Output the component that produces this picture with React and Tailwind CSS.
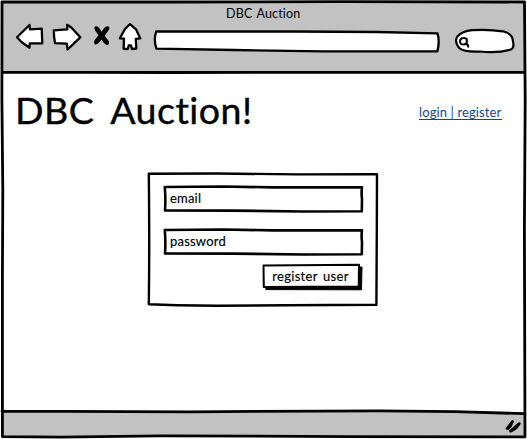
const strokeProps = { fill: 'none', stroke: '#000', strokeLinejoin: 'round', strokeLinecap: 'round' };

// Hand-drawn outline that sits behind the content of its box.
function Outline({ w, h, d, fill = 'none', stroke = 2.6 }) {
  return (
    <svg className="pointer-events-none absolute top-0 left-0 overflow-visible" width={w} height={h} viewBox={`0 0 ${w} ${h}`} aria-hidden="true">
      <path {...strokeProps} d={d} fill={fill} strokeWidth={stroke} />
    </svg>
  );
}

function NavIcons() {
  return (
    <svg className="block shrink-0" width="128" height="32" viewBox="15 21 128 32" aria-label="Navigation">
      <g {...strokeProps} strokeWidth="2.3">
        <path fill="#fff" d="M17 37.3 L29.5 25 L30 29.3 L41.7 28.6 L42.3 43.3 L29.8 43.3 L29.5 47.7 L21.5 42 Z" />
        <path fill="#fff" d="M53.8 30.3 L67.3 29.4 L67.2 24.8 L71.3 27.5 L80.3 37.3 L67.6 49.5 L66.8 43.6 L55 43.2 Q53.7 36 53.8 30.3 Z" />
        <path fill="#fff" d="M130 24.2 L125 29 L119.8 38.4 L124 38.7 L123.6 48.8 L127.8 49 L128.7 45.5 L130.9 45.3 L132 49 L136.3 48.5 L135.8 38.8 L140.2 38.3 L136 29.3 Z" />
      </g>
      <path d="M95 26.5 Q97.5 25.4 99.5 28.5 L101.6 31.8 L104 28.2 Q106.5 25.3 109.3 27 Q110.2 29 107.8 31.5 L104.7 35.8 L108.8 41.3 Q109.6 44.8 107 45 Q104.3 44.4 101.4 39.5 Q98 44.8 95 44.6 Q93 42.5 95 39.5 L98.5 35.2 L95.6 31.2 Q93.6 28 95 26.5 Z" />
    </svg>
  );
}

function Field({ label }) {
  return (
    <div className="relative flex h-[28px] w-[201px] items-center pl-[7px]">
      <Outline w={201} h={28} fill="#fff" d="M1.8 2 L60 1.5 L110 2.4 L199 2.3 Q198.2 8 199 14 L198.8 26.3 L140 26.5 L70 25.6 L2 25.5 Q2.8 14 1.8 2 Z" />
      <span className="relative -mt-[2px] text-[13px] leading-[16px] tracking-[0.2px] whitespace-nowrap [-webkit-text-stroke:0.15px_black]">{label}</span>
    </div>
  );
}

export default function App() {
  return (
    <div className="relative flex h-[439px] w-[527px] flex-col overflow-hidden bg-white font-[Lato,'Liberation_Sans',sans-serif] text-black">
      <header className="flex h-[73px] shrink-0 flex-col bg-[#c2c2c2]">
        <div className="h-[21px] pt-[6px] pl-[226px] text-[12.5px] leading-[16px] tracking-[0.15px] [word-spacing:1.2px] whitespace-nowrap">DBC Auction</div>
        <div className="flex h-[40px] items-start pl-[15px]">
          <NavIcons />
          <div className="relative mt-[9px] ml-[10px] h-[23px] w-[288px]">
            <Outline w={288} h={23} fill="#fff" stroke={2.3} d="M3.2 1.5 L140 1.5 L224 2 L284.5 3.4 Q287 12 284.3 21.4 L170 21.3 L80 20 L3.4 18.7 Q0.4 10 3.2 1.5 Z" />
          </div>
          <div className="relative mt-[7px] ml-[13px] h-[26px] w-[62px]">
            <Outline w={62} h={26} fill="#fff" stroke={2.2} d="M3.3 8.5 Q8 3.3 18 2.2 Q34 1 49 3.3 Q58.6 5.7 58.9 13 Q60.8 20.5 56 21.8 Q43 25.5 26 23.5 Q10 24.2 5.2 20 Q0 14 3.3 8.5 Z" />
            <svg className="absolute top-[8px] left-[4px]" width="13" height="14" viewBox="0 0 13 14" aria-label="Search">
              <path {...strokeProps} strokeWidth="2" d="M3.6 2.4 Q7 1.1 8.8 3.2 L8.8 7 Q6.4 9.4 2.8 7.8 Q0.9 4.5 3.6 2.4 M7 8 L9.8 8.7 L10.2 10.8" />
            </svg>
          </div>
        </div>
      </header>

      <main className="flex min-h-0 flex-1 flex-col">
        <div className="flex h-[99px] items-start justify-between pr-[25px] pl-[15px]">
          <h1 className="mt-[13px] text-[37.5px] leading-[48px] tracking-[0.5px] [word-spacing:7px] whitespace-nowrap [-webkit-text-stroke:0.4px_black]">DBC Auction!</h1>
          <a href="#" className="mt-[31px] h-[16px] w-[83px] border-b border-[#0b4a8f] text-[13px] leading-[16px] tracking-[0.12px] whitespace-nowrap text-[#124a8c]">login | register</a>
        </div>
        <section className="relative ml-[147px] flex h-[135px] w-[232px] flex-col items-start pt-[13px] pl-[16px]">
          <Outline w={232} h={135} stroke={2.4} d="M1.8 1.7 L70 1.5 L150 2.4 L230 2.2 L229.8 60 L229.4 132.8 L140 133.2 L70 133.8 L30 133.2 L1.8 132.2 Q2.6 75 1.8 1.7 Z" />
          <Field label="email" />
          <div className="mt-[15px]"><Field label="password" /></div>
          <button type="button" className="relative mt-[7px] ml-[99px] h-[28px] w-[101px] pr-[4px] pb-[3px] text-[13px] leading-[16px] tracking-[0.3px] [word-spacing:2px] whitespace-nowrap [-webkit-text-stroke:0.15px_black]">
            <Outline w={101} h={28} fill="#000" stroke={1} d="M4 5 L100 4 L99.5 26.8 L4.2 26.6 Z" />
            <Outline w={101} h={28} fill="#fff" stroke={2} d="M1.5 2.5 L97 1.7 L96.7 23.4 L1.8 24 Z" />
            <span className="relative">register user</span>
          </button>
        </section>
      </main>

      <footer className="flex h-[28px] shrink-0 items-start justify-end bg-[#c2c2c2] pr-[5px]">
        <svg className="mt-[7px]" width="18" height="17" viewBox="504 418 18 17" aria-label="Resize">
          <path {...strokeProps} strokeWidth="2.8" d="M507 428.5 L512.5 421.5 L510.5 426 L508 428.5 M510.5 431 L519.3 423.7 L516 428 L511 431" />
        </svg>
      </footer>

      <svg className="pointer-events-none absolute inset-0" width="527" height="439" viewBox="0 0 527 439" aria-hidden="true">
        <path fill="#fff" fillRule="evenodd" d="M0 0H527V439H0Z M2 1.5V436H525V1.5Z" />
        <path fill="#fff" d="M400 409 L525 409 L525 413.5 L450 411.5 Z" />
        <path {...strokeProps} strokeWidth="2.8" d="M2 1.9 L180 2 L340 1.7 L524.5 2 L525.2 100 L524.4 230 L525 436.8 L350 436.6 L160 435.8 L60 437.2 L2.4 436.6 L2.4 280 L2.8 190 L1.9 100 Z M2 72.2 L170 72.5 L340 72.3 L525 72.3 M2 411.2 L190 411.8 L380 410.8 L455 411.6 L525 413.7" />
      </svg>
    </div>
  );
}
